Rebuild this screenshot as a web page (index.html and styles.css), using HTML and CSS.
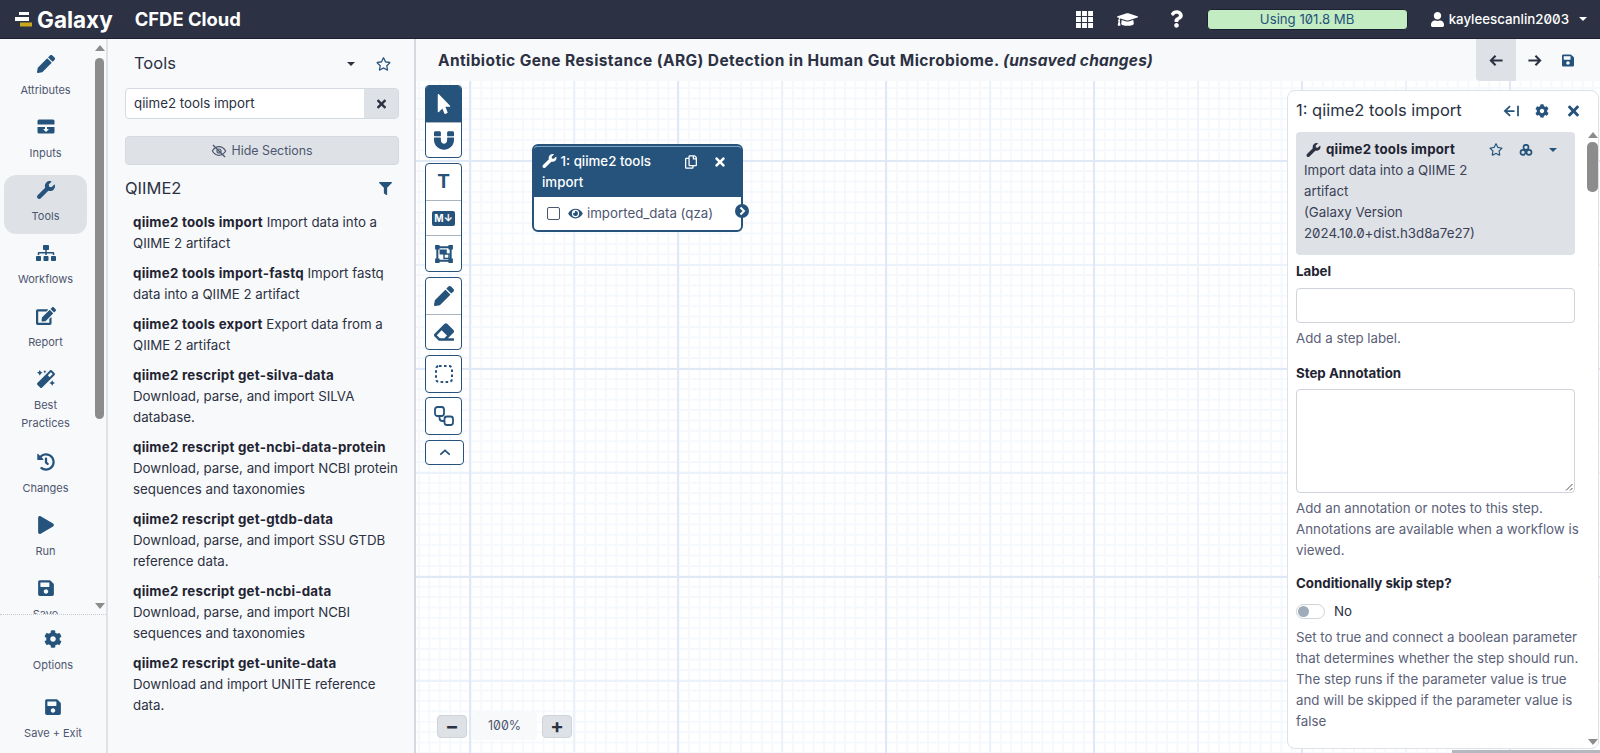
FILE: index.html
```html
<!DOCTYPE html>
<html lang="en">
<head>
  <meta charset="UTF-8" />
  <title>Galaxy Workflow Editor</title>
  <link rel="stylesheet" href="styles.css">
</head>
<body>

<svg class="defs" aria-hidden="true">
  <symbol id="i-pencil" viewBox="0 0 512 512"><path d="M497.9 142.1l-46.1 46.1c-4.7 4.7-12.3 4.7-17 0l-111-111c-4.7-4.7-4.7-12.3 0-17l46.1-46.1c18.7-18.7 49.1-18.7 67.9 0l60.1 60.1c18.8 18.7 18.8 49.1 0 67.9zM284.2 99.8L21.6 362.4.4 483.9c-2.9 16.4 11.4 30.6 27.8 27.8l121.5-21.3 262.6-262.6c4.7-4.7 4.7-12.3 0-17l-111-111c-4.8-4.7-12.4-4.7-17.1 0z"/></symbol>
  <symbol id="i-wrench" viewBox="0 0 512 512"><path d="M507.73 109.1c-2.24-9.03-13.54-12.09-20.12-5.51l-74.36 74.36-67.88-11.31-11.31-67.88 74.36-74.36c6.62-6.62 3.43-17.9-5.66-20.16-47.38-11.74-99.55.91-136.58 37.93-39.64 39.64-50.55 97.1-34.05 147.2L18.74 402.76c-24.99 24.99-24.99 65.51 0 90.5 24.99 24.99 65.51 24.99 90.5 0l213.21-213.21c50.12 16.71 107.47 5.68 147.37-34.22 37.07-37.07 49.7-89.32 37.91-136.73z"/></symbol>
  <symbol id="i-save" viewBox="0 0 448 512"><path d="M433.941 129.941l-83.882-83.882A48 48 0 0 0 316.118 32H48C21.49 32 0 53.49 0 80v352c0 26.51 21.49 48 48 48h352c26.51 0 48-21.49 48-48V163.882a48 48 0 0 0-14.059-33.941zM224 416c-35.346 0-64-28.654-64-64 0-35.346 28.654-64 64-64s64 28.654 64 64c0 35.346-28.654 64-64 64zm96-304.52V212c0 6.627-5.373 12-12 12H76c-6.627 0-12-5.373-12-12V108c0-6.627 5.373-12 12-12h228.52c3.183 0 6.235 1.264 8.485 3.515l3.48 3.48A11.996 11.996 0 0 1 320 111.48z"/></symbol>
  <symbol id="i-play" viewBox="0 0 448 512"><path d="M424.4 214.7L72.4 6.6C43.8-10.3 0 6.1 0 47.9V464c0 37.5 40.7 60.1 72.4 41.3l352-208c31.4-18.5 31.5-64.1 0-82.6z"/></symbol>
  <symbol id="i-cog" viewBox="0 0 512 512"><path d="M487.4 315.7l-42.6-24.6c4.3-23.2 4.3-47 0-70.2l42.6-24.6c4.9-2.8 7.1-8.6 5.5-14-11.1-35.6-30-67.8-54.7-94.6-3.8-4.1-10-5.1-14.8-2.3L380.8 110c-17.9-15.4-38.5-27.3-60.8-35.1V25.8c0-5.6-3.9-10.5-9.4-11.7-36.7-8.2-74.3-7.8-109.2 0-5.5 1.2-9.4 6.1-9.4 11.7V75c-22.2 7.9-42.8 19.8-60.8 35.1L88.7 85.5c-4.9-2.8-11-1.9-14.8 2.3-24.7 26.7-43.6 58.9-54.7 94.6-1.7 5.4.6 11.2 5.5 14L67.3 221c-4.3 23.2-4.3 47 0 70.2l-42.6 24.6c-4.9 2.8-7.1 8.6-5.5 14 11.1 35.6 30 67.8 54.7 94.6 3.8 4.1 10 5.1 14.8 2.3l42.6-24.6c17.9 15.4 38.5 27.3 60.8 35.1v49.2c0 5.6 3.9 10.5 9.4 11.7 36.7 8.2 74.3 7.8 109.2 0 5.5-1.2 9.4-6.1 9.4-11.7v-49.2c22.2-7.9 42.8-19.8 60.8-35.1l42.6 24.6c4.9 2.8 11 1.9 14.8-2.3 24.7-26.7 43.6-58.9 54.7-94.6 1.5-5.5-.7-11.3-5.6-14.1zM256 336c-44.1 0-80-35.9-80-80s35.9-80 80-80 80 35.9 80 80-35.9 80-80 80z"/></symbol>
  <symbol id="i-times" viewBox="0 0 352 512"><path d="M242.72 256l100.07-100.07c12.28-12.28 12.28-32.19 0-44.48l-22.24-22.24c-12.28-12.28-32.19-12.28-44.48 0L176 189.28 75.93 89.21c-12.28-12.28-32.19-12.28-44.48 0L9.21 111.45c-12.28 12.28-12.28 32.19 0 44.48L109.28 256 9.21 356.07c-12.28 12.28-12.28 32.19 0 44.48l22.24 22.24c12.28 12.28 32.2 12.28 44.48 0L176 322.72l100.07 100.07c12.28 12.28 32.2 12.28 44.48 0l22.24-22.24c12.28-12.28 12.28-32.19 0-44.48L242.72 256z"/></symbol>
  <symbol id="i-user" viewBox="0 0 448 512"><path d="M224 256c70.7 0 128-57.3 128-128S294.7 0 224 0 96 57.3 96 128s57.3 128 128 128zm89.6 32h-16.7c-22.2 10.2-46.9 16-72.9 16s-50.6-5.8-72.9-16h-16.7C60.2 288 0 348.2 0 422.4V464c0 26.5 21.5 48 48 48h352c26.5 0 48-21.5 48-48v-41.6c0-74.2-60.2-134.4-134.4-134.4z"/></symbol>
  <symbol id="i-star" viewBox="0 0 576 512"><path d="M528.1 171.5L382 150.2 316.7 17.8c-11.7-23.6-45.6-23.9-57.4 0L194 150.2 47.9 171.4c-26.2 3.8-36.7 36.1-17.7 54.6l105.7 103-25 145.5c-4.5 26.3 23.2 46 46.4 33.7L288 439.6l130.7 68.7c23.2 12.2 50.9-7.4 46.4-33.7l-25-145.5 105.7-103c19-18.5 8.5-50.8-17.7-54.6zM388.6 312.3l23.7 138.4L288 385.4l-124.3 65.3 23.7-138.4-100.6-98 139-20.2 62.2-126 62.2 126 139 20.2-100.6 98z"/></symbol>
  <symbol id="i-filter" viewBox="0 0 512 512"><path d="M487.976 0H24.028C2.71 0-8.047 25.866 7.058 40.971L192 225.941V432c0 7.831 3.821 15.17 10.237 19.662l80 55.98C298.02 518.69 320 507.493 320 487.98V225.941l184.947-184.97C520.021 25.896 509.338 0 487.976 0z"/></symbol>
  <symbol id="i-question" viewBox="0 0 384 512"><path d="M202.021 0C122.202 0 70.503 32.703 29.914 91.026c-7.363 10.58-5.093 25.086 5.178 32.874l43.138 32.709c10.373 7.865 25.132 6.026 33.253-4.148 25.049-31.381 43.63-49.449 82.757-49.449 30.764 0 68.816 19.799 68.816 49.631 0 22.552-18.617 34.134-48.993 51.164-35.423 19.86-82.299 44.576-82.299 106.405V320c0 13.255 10.745 24 24 24h72.471c13.255 0 24-10.745 24-24v-5.773c0-42.86 125.268-44.645 125.268-160.627C377.504 66.256 286.902 0 202.021 0zM192 373.459c-38.196 0-69.271 31.075-69.271 69.271 0 38.195 31.075 69.27 69.271 69.27s69.271-31.075 69.271-69.271-31.075-69.27-69.271-69.27z"/></symbol>
  <symbol id="i-cap" viewBox="0 0 640 512"><path d="M622.34 153.2L343.4 67.5c-15.2-4.67-31.6-4.67-46.79 0L17.66 153.2c-23.54 7.23-23.54 38.36 0 45.59l48.63 14.94c-10.67 13.19-17.23 29.28-17.88 46.9C38.78 266.15 32 276.11 32 288c0 10.78 5.68 19.85 13.86 25.65L20.33 428.53C18.11 438.52 25.71 448 35.94 448h56.11c10.24 0 17.84-9.48 15.62-19.47L82.14 313.65C90.32 307.85 96 298.78 96 288c0-11.57-6.47-21.25-15.66-26.87.76-15.02 8.44-28.3 20.69-36.72L296.6 284.5c9.06 2.78 26.44 6.25 46.79 0l278.95-85.7c23.55-7.24 23.55-38.36 0-45.6zM352.79 315.09c-28.53 8.76-52.84 3.92-65.59 0l-145.02-44.55L128 384c0 35.35 85.96 64 192 64s192-28.65 192-64l-14.18-113.47-145.03 44.56z"/></symbol>
  <symbol id="i-sitemap" viewBox="0 0 640 512"><path d="M128 352H32c-17.67 0-32 14.33-32 32v96c0 17.67 14.33 32 32 32h96c17.67 0 32-14.33 32-32v-96c0-17.67-14.33-32-32-32zm-24-80h192v48h48v-48h192v48h48v-57.59c0-21.17-17.23-38.41-38.41-38.41H344v-64h40c17.67 0 32-14.33 32-32V32c0-17.67-14.33-32-32-32H256c-17.67 0-32 14.33-32 32v96c0 17.67 14.33 32 32 32h40v64H94.41C73.23 224 56 241.23 56 262.41V320h48v-48zm264 80h-96c-17.67 0-32 14.33-32 32v96c0 17.67 14.33 32 32 32h96c17.67 0 32-14.33 32-32v-96c0-17.67-14.33-32-32-32zm240 0h-96c-17.67 0-32 14.33-32 32v96c0 17.67 14.33 32 32 32h96c17.67 0 32-14.33 32-32v-96c0-17.67-14.33-32-32-32z"/></symbol>
  <symbol id="i-edit" viewBox="0 0 576 512"><path d="M402.6 83.2l90.2 90.2c3.8 3.8 3.8 10 0 13.8L274.4 405.6l-92.8 10.3c-12.4 1.4-22.9-9.1-21.5-21.5l10.3-92.8L388.8 83.2c3.8-3.8 10-3.8 13.8 0zm162-22.9l-48.8-48.8c-15.2-15.2-39.9-15.2-55.2 0l-35.4 35.4c-3.8 3.8-3.8 10 0 13.8l90.2 90.2c3.8 3.8 10 3.8 13.8 0l35.4-35.4c15.2-15.3 15.2-40 0-55.2zM384 346.2V448H64V128h229.8c3.2 0 6.2-1.3 8.5-3.5l40-40c7.6-7.6 2.2-20.5-8.5-20.5H48C21.5 64 0 85.5 0 112v352c0 26.5 21.5 48 48 48h352c26.5 0 48-21.5 48-48V306.2c0-10.7-12.9-16-20.5-8.5l-40 40c-2.2 2.3-3.5 5.3-3.5 8.5z"/></symbol>
  <symbol id="i-magic" viewBox="0 0 512 512"><path d="M224 96l16-32 32-16-32-16-16-32-16 32-32 16 32 16 16 32zM80 160l26.66-53.33L160 80l-53.34-26.67L80 0 53.34 53.33 0 80l53.34 26.67L80 160zm352 128l-26.66 53.33L352 368l53.34 26.67L432 448l26.66-53.33L512 368l-53.34-26.67L432 288zm70.62-193.77L417.77 9.38C411.53 3.12 403.34 0 395.15 0c-8.19 0-16.38 3.12-22.63 9.38L9.38 372.52c-12.5 12.5-12.5 32.76 0 45.25l84.85 84.85c6.25 6.25 14.44 9.37 22.62 9.37 8.19 0 16.38-3.12 22.63-9.37l363.14-363.15c12.5-12.48 12.5-32.75 0-45.24zM359.45 203.46l-50.91-50.91 86.6-86.6 50.91 50.91-86.6 86.6z"/></symbol>
  <symbol id="i-history" viewBox="0 0 512 512"><path d="M504 255.531c.253 136.64-111.18 248.372-247.82 248.468-59.015.042-113.223-20.53-155.822-54.911-11.077-8.94-11.905-25.541-1.839-35.607l11.267-11.267c8.609-8.609 22.353-9.551 31.891-1.984C173.062 425.135 212.781 440 256 440c101.705 0 184-82.311 184-184 0-101.705-82.311-184-184-184-48.814 0-93.149 18.969-126.068 49.932l50.754 50.754c10.08 10.08 2.941 27.314-11.313 27.314H24c-8.837 0-16-7.163-16-16V38.627c0-14.254 17.234-21.393 27.314-11.314l49.372 49.372C129.209 34.136 189.552 8 256 8c136.81 0 247.747 110.78 248 247.531zm-180.912 78.784l9.823-12.63c8.138-10.463 6.253-25.542-4.21-33.679L288 256.349V152c0-13.255-10.745-24-24-24h-16c-13.255 0-24 10.745-24 24v135.651l65.409 50.874c10.463 8.137 25.541 6.253 33.679-4.21z"/></symbol>
  <symbol id="i-eye" viewBox="0 0 576 512"><path d="M572.52 241.4C518.29 135.59 410.93 64 288 64S57.68 135.64 3.48 241.41a32.35 32.35 0 0 0 0 29.19C57.71 376.41 165.07 448 288 448s230.32-71.64 284.52-177.41a32.35 32.35 0 0 0 0-29.19zM288 400a144 144 0 1 1 144-144 143.93 143.93 0 0 1-144 144zm0-240a95.31 95.31 0 0 0-25.31 3.79 47.85 47.85 0 0 1-66.9 66.9A95.78 95.78 0 1 0 288 160z"/></symbol>
  <symbol id="i-eraser" viewBox="0 0 512 512"><path d="M497.941 273.941c18.745-18.745 18.745-49.137 0-67.882l-160-160c-18.745-18.745-49.137-18.745-67.882 0l-256 256c-18.745 18.745-18.745 49.137 0 67.882l96 96A48.004 48.004 0 0 0 144 480h356c6.627 0 12-5.373 12-12v-40c0-6.627-5.373-12-12-12H355.883l142.058-142.059zm-302.627-62.627l137.373 137.373L265.373 416H150.628l-80-80 124.686-124.686z"/></symbol>
  <symbol id="i-pointer" viewBox="0 0 320 512"><path d="M302.189 329.126H196.105l55.831 135.993c3.889 9.428-.555 19.999-9.444 23.999l-49.165 21.427c-9.165 4-19.443-.571-23.332-9.714l-53.053-129.136-86.664 89.138C18.729 472.71 0 463.554 0 447.977V18.299C0 1.899 19.921-6.096 30.277 5.443l284.412 292.542c11.472 11.179 3.007 31.141-12.5 31.141z"/></symbol>
  <symbol id="i-magnet" viewBox="0 0 512 512"><path d="M164 160H12c-6.6 0-12-5.4-12-12V68c0-19.900 16.100-36 36-36h104c19.900 0 36 16.100 36 36v80c0 6.600-5.400 12-12 12zm348-12V68c0-19.900-16.100-36-36-36H372c-19.900 0-36 16.100-36 36v80c0 6.600 5.400 12 12 12h152c6.600 0 12-5.400 12-12zm-164 44c-6.600 0-12 5.400-12 12v52c0 128-160 128-160 0v-52c0-6.600-5.400-12-12-12H12c-6.700 0-12 5.400-12 12v53c0 151 136 247 257 247s255-96 255-247v-53c0-6.700-5.300-12-12-12H348z"/></symbol>
  <symbol id="i-copy" viewBox="0 0 448 512"><path d="M433.941 65.941l-51.882-51.882A48 48 0 0 0 348.118 0H176c-26.51 0-48 21.49-48 48v48H48c-26.51 0-48 21.49-48 48v320c0 26.51 21.49 48 48 48h224c26.51 0 48-21.49 48-48v-48h80c26.51 0 48-21.49 48-48V99.882a48 48 0 0 0-14.059-33.941zM266 464H54a6 6 0 0 1-6-6V150a6 6 0 0 1 6-6h74v224c0 26.51 21.49 48 48 48h96v42a6 6 0 0 1-6 6zm128-96H182a6 6 0 0 1-6-6V54a6 6 0 0 1 6-6h106v88c0 13.255 10.745 24 24 24h88v202a6 6 0 0 1-6 6zm6-256h-64V48h9.632c1.591 0 3.117.632 4.243 1.757l48.368 48.368a6 6 0 0 1 1.757 4.243V112z"/></symbol>
</svg>

<!-- Top bar -->
<header class="topbar">
  <div class="brand">
    <svg class="brand-logo" viewBox="0 0 18 15"><rect x="4" y="0" width="10" height="3" fill="#fff"/><rect x="0" y="5" width="14" height="4" fill="#fff"/><rect x="5" y="10.500" width="12" height="4" fill="#c9a81f"/></svg>
    <span class="brand-name">Galaxy</span>
    <span class="brand-sub">CFDE Cloud</span>
  </div>
  <div class="topbar-right">
    <svg class="top-grid" viewBox="0 0 16 16"><path d="M0 0h4.600v4.600H0zM5.700 0h4.600v4.600H5.700zM11.400 0H16v4.600h-4.600zM0 5.700h4.600v4.600H0zM5.700 5.700h4.600v4.600H5.700zM11.400 5.700H16v4.600h-4.600zM0 11.400h4.600V16H0zM5.700 11.400h4.600V16H5.700zM11.400 11.400H16V16h-4.600z"/></svg>
    <svg class="top-cap"><use href="#i-cap"/></svg>
    <svg class="top-help"><use href="#i-question"/></svg>
    <div class="quota">Using 101.8 MB</div>
    <div class="user">
      <svg class="top-user"><use href="#i-user"/></svg>
      <span>kayleescanlin2003</span>
      <span class="caret caret-white"></span>
    </div>
  </div>
</header>

<div class="main">
  <!-- Activity bar -->
  <nav class="activity">
    <div class="activity-scroll">
      <div class="activity-list">
        <a class="act"><svg><use href="#i-pencil"/></svg><span>Attributes</span></a>
        <a class="act">
          <svg viewBox="0 0 18 18"><path d="M2 1.500h14a1.500 1.500 0 0 1 1.500 1.500v3.500H.5V3A1.500 1.500 0 0 1 2 1.500zM.5 9H8v2H6l3 3 3-3h-2V9h7.500v5a1.500 1.500 0 0 1-1.500 1.500H2A1.500 1.500 0 0 1 .5 14z"/></svg>
          <span>Inputs</span>
        </a>
        <a class="act act-on"><svg><use href="#i-wrench"/></svg><span>Tools</span></a>
        <a class="act"><svg><use href="#i-sitemap"/></svg><span>Workflows</span></a>
        <a class="act"><svg><use href="#i-edit"/></svg><span>Report</span></a>
        <a class="act act-tall"><svg><use href="#i-magic"/></svg><span>Best Practices</span></a>
        <a class="act"><svg><use href="#i-history"/></svg><span>Changes</span></a>
        <a class="act"><svg><use href="#i-play"/></svg><span>Run</span></a>
        <a class="act"><svg><use href="#i-save"/></svg><span>Save</span></a>
      </div>
      <div class="scrollbar">
        <span class="sb-up"></span>
        <div class="sb-track"><div class="sb-thumb"></div></div>
        <span class="sb-down"></span>
      </div>
    </div>
    <div class="activity-bottom">
      <a class="act"><svg><use href="#i-cog"/></svg><span>Options</span></a>
      <a class="act"><svg><use href="#i-save"/></svg><span>Save + Exit</span></a>
    </div>
  </nav>

  <!-- Tool panel -->
  <aside class="tools">
    <div class="tools-head">
      <h3>Tools</h3>
      <span class="caret"></span>
      <svg class="tools-star"><use href="#i-star"/></svg>
    </div>
    <div class="search">
      <div class="search-input">qiime2 tools import</div>
      <div class="search-clear"><svg><use href="#i-times"/></svg></div>
    </div>
    <div class="hide-btn">
      <svg viewBox="0 0 24 20"><path d="M2 10s4-6.500 10-6.500S22 10 22 10s-4 6.500-10 6.500S2 10 2 10z" fill="none" stroke="currentColor" stroke-width="1.800"/><circle cx="12" cy="10" r="3" fill="none" stroke="currentColor" stroke-width="1.800"/><path d="M3 1l18 18" stroke="currentColor" stroke-width="2"/></svg>
      Hide Sections
    </div>
    <div class="section-head">
      <span>QIIME2</span>
      <svg><use href="#i-filter"/></svg>
    </div>
    <ul class="tool-list">
      <li><b>qiime2 tools import</b> Import data into a QIIME 2 artifact</li>
      <li><b>qiime2 tools import-fastq</b> Import fastq data into a QIIME 2 artifact</li>
      <li><b>qiime2 tools export</b> Export data from a QIIME 2 artifact</li>
      <li><b>qiime2 rescript get-silva-data</b> Download, parse, and import SILVA database.</li>
      <li><b>qiime2 rescript get-ncbi-data-protein</b> Download, parse, and import NCBI protein sequences and taxonomies</li>
      <li><b>qiime2 rescript get-gtdb-data</b> Download, parse, and import SSU GTDB reference data.</li>
      <li><b>qiime2 rescript get-ncbi-data</b> Download, parse, and import NCBI sequences and taxonomies</li>
      <li><b>qiime2 rescript get-unite-data</b> Download and import UNITE reference data.</li>
    </ul>
  </aside>

  <!-- Workflow editor -->
  <section class="editor">
    <div class="editor-head">
      <div class="wf-title">Antibiotic Gene Resistance (ARG) Detection in Human Gut Microbiome. <i>(unsaved changes)</i></div>
      <div class="head-btns">
        <a class="head-btn head-btn-on"><svg viewBox="0 0 16 16"><path d="M14.500 8H2M7 3L2 8l5 5"/></svg></a>
        <a class="head-btn"><svg viewBox="0 0 16 16"><path d="M1.500 8H14M9 3l5 5-5 5"/></svg></a>
        <a class="head-btn head-save"><svg><use href="#i-save"/></svg></a>
      </div>
    </div>
    <div class="canvas">
      <div class="toolbar">
        <div class="tb-group">
          <a class="tb tb-on"><svg class="ic-pointer"><use href="#i-pointer"/></svg></a>
          <a class="tb"><svg><use href="#i-magnet"/></svg></a>
        </div>
        <div class="tb-group">
          <a class="tb"><span class="tb-t">T</span></a>
          <a class="tb"><span class="tb-md">M↓</span></a>
          <a class="tb"><svg viewBox="0 0 18 18"><path d="M3 3h12v12H3z" fill="none" stroke="currentColor" stroke-width="1.800"/><path d="M1 1h4v4H1zM13 1h4v4h-4zM1 13h4v4H1zM13 13h4v4h-4zM5 5h6.500v4.500H5z"/><rect x="9" y="9" width="4.500" height="4" fill="#fff" stroke="currentColor" stroke-width="1.300"/></svg></a>
        </div>
        <div class="tb-group">
          <a class="tb"><svg><use href="#i-pencil"/></svg></a>
          <a class="tb"><svg><use href="#i-eraser"/></svg></a>
        </div>
        <div class="tb-group">
          <a class="tb"><svg viewBox="0 0 20 20"><rect x="2" y="2" width="16" height="16" rx="3" fill="none" stroke="currentColor" stroke-width="2" stroke-dasharray="2.600 2.400"/></svg></a>
        </div>
        <div class="tb-group">
          <a class="tb"><svg viewBox="0 0 20 20"><rect x="1" y="1" width="9" height="9" rx="2.500" fill="none" stroke="currentColor" stroke-width="1.800"/><rect x="10.500" y="10.500" width="8.500" height="8.500" rx="2.500" fill="none" stroke="currentColor" stroke-width="1.800"/><path d="M5.500 10v2a3 3 0 0 0 3 3h2" fill="none" stroke="currentColor" stroke-width="1.800"/></svg></a>
        </div>
        <a class="tb-collapse"><svg viewBox="0 0 14 8"><path d="M1.500 6.500L7 1.500l5.500 5"/></svg></a>
      </div>

      <div class="node">
        <div class="node-head">
          <div class="node-icons">
            <svg class="node-copy"><use href="#i-copy"/></svg>
            <svg class="node-close"><use href="#i-times"/></svg>
          </div>
          <svg class="node-wrench"><use href="#i-wrench"/></svg> 1: qiime2 tools import
        </div>
        <div class="node-row">
          <span class="node-check"></span>
          <svg class="node-eye"><use href="#i-eye"/></svg>
          <span>imported_data (qza)</span>
        </div>
        <span class="node-port"><svg viewBox="0 0 14 14"><path d="M5.500 3.500L9 7l-3.500 3.500"/></svg></span>
      </div>

      <div class="zoom">
        <a class="zoom-btn">−</a>
        <span class="zoom-val">100%</span>
        <a class="zoom-btn">+</a>
      </div>

      <div class="minimap-peek"></div>

      <aside class="props">
        <div class="props-head">
          <span>1: qiime2 tools import</span>
          <div class="props-icons">
            <svg class="ic-back" viewBox="0 0 20 16"><path d="M9 2.500L3 8l6 5.500M3 8h11M18 2v12"/></svg>
            <svg class="ic-cog"><use href="#i-cog"/></svg>
            <svg class="ic-x"><use href="#i-times"/></svg>
          </div>
        </div>
        <div class="props-body">
          <div class="props-scroll">
            <div class="card">
              <div class="card-icons">
                <svg class="card-star"><use href="#i-star"/></svg>
                <svg class="card-share" viewBox="0 0 20 18"><circle cx="10" cy="5" r="3.800"/><circle cx="5.500" cy="12.500" r="3.800"/><circle cx="14.500" cy="12.500" r="3.800"/></svg>
                <span class="caret caret-blue"></span>
              </div>
              <div class="card-title"><svg><use href="#i-wrench"/></svg><b>qiime2 tools import</b></div>
              <div class="card-text">Import data into a QIIME 2<br>artifact<br>(Galaxy Version<br>2024.10.0+dist.h3d8a7e27)</div>
            </div>
            <div class="field-label">Label</div>
            <div class="text-input"></div>
            <div class="help">Add a step label.</div>
            <div class="field-label field-gap">Step Annotation</div>
            <div class="text-area">
              <svg viewBox="0 0 8 8"><path d="M7.500 1L1 7.500M7.500 5L5 7.500"/></svg>
            </div>
            <div class="help">Add an annotation or notes to this step. Annotations are available when a workflow is viewed.</div>
            <div class="field-label field-skip">Conditionally skip step?</div>
            <div class="toggle-row"><span class="switch"></span><span>No</span></div>
            <div class="help help-last">Set to true and connect a boolean parameter that determines whether the step should run. The step runs if the parameter value is true and will be skipped if the parameter value is false</div>
          </div>
          <div class="scrollbar props-bar">
            <span class="sb-up"></span>
            <div class="sb-track"><div class="sb-thumb"></div></div>
            <span class="sb-down"></span>
          </div>
        </div>
      </aside>
    </div>
  </section>
</div>

</body>
</html>
```

FILE: styles.css
```css
* {
  box-sizing: border-box;
}

html, body {
  margin: 0;
  height: 753px;
  overflow: hidden;
}

body {
  display: flex;
  flex-direction: column;
  font-family: "Inter", "Noto Sans", sans-serif;
  font-size: 13.3px;
  font-feature-settings: "zero";
  line-height: 21px;
  color: #2c3143;
  background: #f8f9fa;
}

svg {
  fill: currentColor;
}

.defs {
  display: none;
}

.caret {
  display: inline-block;
  width: 0;
  height: 0;
  border-left: 4px solid transparent;
  border-right: 4px solid transparent;
  border-top: 4.5px solid #2c3143;
}

.caret-white {
  border-top-color: #fff;
}

.caret-blue {
  border-top-color: #25537b;
}

/* Top bar */
.topbar {
  flex: 0 0 39px;
  display: flex;
  justify-content: space-between;
  align-items: center;
  background: #2c3143;
  border-bottom: 1px solid #1c2030;
  color: #fff;
}

.brand {
  display: flex;
  align-items: center;
  padding-left: 15px;
}

.brand-logo {
  width: 18px;
  height: 15px;
  margin-right: 4px;
}

.brand-name {
  font-size: 22.5px;
  font-weight: 700;
}

.brand-sub {
  font-size: 18.4px;
  font-weight: 700;
  margin-left: 22px;
}

.topbar-right {
  display: flex;
  align-items: center;
  padding-right: 13px;
}

.top-grid {
  width: 17px;
  height: 17px;
  margin-right: 24px;
}

.top-cap {
  width: 21px;
  height: 17px;
  margin-right: 32px;
}

.top-help {
  width: 13px;
  height: 18px;
  margin-right: 24px;
}

.quota {
  width: 201px;
  height: 21px;
  border-radius: 4px;
  border: 1px solid #1c2030;
  background: #c3ecc2;
  color: #25537b;
  text-align: center;
  line-height: 19px;
  font-size: 13.2px;
  margin-right: 23px;
}

.user {
  display: flex;
  align-items: center;
  font-size: 13.3px;
  font-weight: 500;
}

.top-user {
  width: 13px;
  height: 15px;
  margin-right: 5px;
}

.user .caret {
  margin-left: 10px;
}

.main {
  flex: 1;
  display: flex;
  min-height: 0;
}

/* Activity bar */
.activity {
  flex: 0 0 108px;
  display: flex;
  flex-direction: column;
  background: #f8f9fa;
  border-right: 2px solid #dfe3e8;
}

.activity-scroll {
  flex: 0 0 575px;
  display: flex;
  overflow: hidden;
}

.activity-list {
  width: 95px;
  padding: 10px 8px 0 4px;
  display: flex;
  flex-direction: column;
  gap: 4px;
}

.act {
  display: flex;
  flex-direction: column;
  align-items: center;
  flex-shrink: 0;
  padding: 6px 12px 9px;
  border-radius: 12px;
  color: #25537b;
  text-align: center;
}

.act svg {
  width: 20px;
  height: 18px;
  margin-bottom: 8px;
}

.act span {
  font-size: 11px;
  line-height: 18px;
  color: #4d5670;
}

.act-on {
  background: #dee2e6;
}

.act-tall {
  padding-bottom: 11px;
}

.activity-bottom {
  flex: 1;
  border-top: 1px dotted #c5cad1;
  padding-top: 15px;
}

.activity-bottom .act {
  height: 68px;
  padding: 0 2px;
}

.scrollbar {
  width: 9px;
  display: flex;
  flex-direction: column;
  align-items: center;
}

.activity-scroll .scrollbar {
  padding-top: 6px;
}

.sb-up, .sb-down {
  width: 0;
  height: 0;
  border-left: 5px solid transparent;
  border-right: 5px solid transparent;
  flex-shrink: 0;
}

.sb-up {
  border-bottom: 6px solid #8c8c8c;
}

.sb-down {
  border-top: 6px solid #8c8c8c;
  margin-bottom: 5px;
}

.sb-track {
  flex: 1;
  width: 100%;
  padding-top: 7px;
}

.sb-thumb {
  width: 100%;
  height: 361px;
  background: #8c8c8c;
  border-radius: 5px;
}

/* Tool panel */
.tools {
  flex: 0 0 308px;
  padding: 0 15px 0 17px;
  background: #f8f9fa;
  border-right: 2px solid #d5dae0;
}

.tools-head {
  display: flex;
  align-items: center;
  height: 49px;
  padding-left: 9px;
}

.tools-head h3 {
  flex: 1;
  margin: 0;
  font-size: 16.5px;
  font-weight: 400;
}

.tools-star {
  width: 15px;
  height: 14px;
  color: #25537b;
  margin: 0 8px 0 21px;
}

.search {
  display: flex;
  height: 31px;
  border: 1px solid #d5dae0;
  border-radius: 4px;
  background: #fff;
}

.search-input {
  flex: 1;
  padding-left: 8px;
  line-height: 29px;
}

.search-clear {
  width: 34px;
  background: #dee2e6;
  display: flex;
  align-items: center;
  justify-content: center;
}

.search-clear svg {
  width: 9px;
  height: 14px;
}

.hide-btn {
  margin-top: 17px;
  height: 29px;
  border: 1px solid #d5dae0;
  border-radius: 4px;
  background: #dee2e6;
  color: #4d5670;
  font-size: 12.4px;
  display: flex;
  align-items: center;
  justify-content: center;
  gap: 4px;
}

.hide-btn svg {
  width: 16px;
  height: 14px;
}

.section-head {
  display: flex;
  justify-content: space-between;
  align-items: center;
  margin-top: 11px;
  height: 24px;
  font-size: 16.5px;
  padding-right: 7px;
}

.section-head svg {
  width: 13px;
  height: 13px;
  color: #25537b;
}

.tool-list {
  list-style: none;
  margin: 12px 0 0;
  padding: 0 0 0 8px;
}

.tool-list li {
  margin-bottom: 9px;
}

.tool-list b {
  font-weight: 700;
  letter-spacing: 0.25px;
  color: #1f2433;
}

/* Editor */
.editor {
  flex: 1;
  display: flex;
  flex-direction: column;
  min-width: 0;
}

.editor-head {
  flex: 0 0 42px;
  display: flex;
  align-items: center;
  justify-content: space-between;
  padding: 0 10px 0 22px;
  background: #f8f9fa;
}

.wf-title {
  font-size: 15.5px;
  font-weight: 700;
  letter-spacing: 0.4px;
  white-space: nowrap;
}

.wf-title i {
  letter-spacing: 0.2px;
}

.head-btns {
  display: flex;
  height: 100%;
}

.head-btn {
  width: 37px;
  display: flex;
  align-items: center;
  justify-content: center;
}

.head-btn svg {
  width: 15px;
  height: 15px;
  fill: none;
  stroke: #2c3143;
  stroke-width: 2.2;
}

.head-btn-on {
  width: 40px;
  background: #dee2e6;
  border-radius: 0 0 0 4px;
}

.head-btn.head-save {
  width: 29px;
  margin-right: 8px;
}

.head-save svg {
  width: 12px;
  fill: #25537b;
  stroke: none;
}

/* Canvas */
.canvas {
  flex: 1;
  position: relative;
  overflow: hidden;
  background-color: #fff;
  background-image:
    linear-gradient(to right, #dfe9f5 2px, transparent 2px),
    linear-gradient(to bottom, #dfe9f5 2px, transparent 2px),
    linear-gradient(to right, #ecf2f9 2px, transparent 2px),
    linear-gradient(to bottom, #ecf2f9 2px, transparent 2px),
    linear-gradient(to right, #f5f8fc 2px, transparent 2px),
    linear-gradient(to bottom, #f5f8fc 2px, transparent 2px);
  background-size:
    208px 100%, 100% 208px,
    104px 100%, 100% 104px,
    10.4px 100%, 100% 10.4px;
  background-position:
    53px 0, 0 79px,
    53px 0, 0 79px,
    2px 0, 0 6px;
}

.toolbar {
  position: absolute;
  left: 9px;
  top: 4px;
  width: 39px;
}

.tb-group {
  width: 37px;
  margin-bottom: 4.7px;
  background: #fff;
  border: 1px solid #25537b;
  border-radius: 4px;
  overflow: hidden;
}

.tb {
  display: flex;
  align-items: center;
  justify-content: center;
  height: 35.7px;
  color: #25537b;
  border-top: 1px solid #aab4c0;
}

.tb:first-child {
  border-top: 0;
}

.tb svg {
  width: 20px;
  height: 20px;
}

.tb .ic-pointer {
  width: 14px;
  height: 20px;
}

.tb-on {
  background: #25537b;
  color: #fff;
}

.tb-t {
  font-size: 19px;
  font-weight: 700;
}

.tb-md {
  width: 23px;
  height: 15px;
  border-radius: 2px;
  background: #25537b;
  color: #fff;
  font-size: 10px;
  font-weight: 700;
  line-height: 15px;
  text-align: center;
  white-space: nowrap;
}

.tb-collapse {
  display: flex;
  align-items: center;
  justify-content: center;
  width: 39px;
  height: 25px;
  background: #fff;
  border: 1px solid #25537b;
  border-radius: 4px;
}

.tb-collapse svg {
  width: 12px;
  height: 7px;
  fill: none;
  stroke: #25537b;
  stroke-width: 2;
}

/* Node */
.node {
  position: absolute;
  left: 116px;
  top: 63px;
  width: 211px;
  height: 88px;
  background: #fff;
  border: 2px solid #25537b;
  border-radius: 6px;
}

.node-head {
  background: #25537b;
  color: #fff;
  padding: 4px 8px;
  height: 51px;
  font-weight: 500;
  border-top: 1px solid #7ea3c2;
  border-radius: 3px 3px 0 0;
}

.node-wrench {
  width: 15px;
  height: 14px;
  vertical-align: -2px;
}

.node-icons {
  float: right;
  display: flex;
  align-items: center;
  height: 21px;
  gap: 18px;
  padding-right: 8px;
}

.node-copy {
  width: 12px;
  height: 14px;
}

.node-close {
  width: 10px;
  height: 14px;
}

.node-row {
  display: flex;
  align-items: center;
  height: 32px;
  padding-left: 13px;
  color: #4d5670;
}

.node-check {
  width: 13px;
  height: 13px;
  border: 1.5px solid #4d5670;
  border-radius: 2px;
  margin-right: 8px;
}

.node-eye {
  width: 15px;
  height: 13px;
  color: #25537b;
  margin-right: 4px;
}

.node-port {
  position: absolute;
  right: -8px;
  bottom: 12px;
  width: 14px;
  height: 14px;
  border-radius: 50%;
  background: #25537b;
}

.node-port svg {
  display: block;
  fill: none;
  stroke: #fff;
  stroke-width: 2;
}

/* Zoom */
.zoom {
  position: absolute;
  left: 21px;
  bottom: 13px;
  display: flex;
  align-items: center;
  gap: 5px;
}

.zoom-btn {
  width: 30px;
  height: 23px;
  background: #dee2e6;
  border: 1px solid #ced3d9;
  border-radius: 4px;
  text-align: center;
  font-size: 20px;
  font-weight: 700;
  line-height: 20px;
}

.zoom-val {
  width: 65px;
  height: 28px;
  background: #f8f9fa;
  border-radius: 4px;
  text-align: center;
  font-size: 12.5px;
  line-height: 28px;
  color: #4d5670;
}

.minimap-peek {
  position: absolute;
  right: 0;
  bottom: 0;
  width: 148px;
  height: 3px;
  background: #b4b9c0;
}

/* Properties panel */
.props {
  position: absolute;
  left: 871px;
  top: 9px;
  width: 312px;
  height: 659px;
  background: #fff;
  border: 1px solid #dee2e6;
  border-radius: 8px;
  display: flex;
  flex-direction: column;
}

.props-head {
  flex: 0 0 37px;
  display: flex;
  align-items: center;
  justify-content: space-between;
  padding: 2px 0 0 8px;
  font-size: 16.5px;
}

.props-icons {
  display: flex;
  align-items: center;
  padding-right: 19px;
}

.props-icons svg {
  color: #25537b;
}

.ic-back {
  width: 18px;
  height: 14px;
  fill: none;
  stroke: #25537b;
  stroke-width: 2;
}

.ic-cog {
  width: 14px;
  height: 14px;
  margin-left: 15px;
}

.ic-x {
  width: 11px;
  height: 16px;
  margin-left: 19px;
}

.props-body {
  flex: 1;
  display: flex;
  min-height: 0;
}

.props-scroll {
  width: 297px;
  padding: 4px 0 0 8px;
  flex-shrink: 0;
}

.props-bar {
  width: 11px;
  padding-top: 4px;
  padding-bottom: 3px;
  margin-left: 2px;
}

.props-bar .sb-track {
  padding-top: 4px;
}

.props-bar .sb-down {
  margin-bottom: 0;
}

.props-bar .sb-thumb {
  height: 50px;
}

.card {
  height: 123px;
  width: 279px;
  padding: 7px 8px 0;
  background: #dee2e6;
  border-radius: 4px;
  color: #3a4056;
}

.card-title {
  display: flex;
  align-items: center;
  padding-left: 2px;
}

.card-title svg {
  width: 15px;
  height: 14px;
  margin-right: 5px;
  color: #2c3143;
}

.card-title b {
  color: #1f2433;
  letter-spacing: 0.2px;
}

.card-icons {
  float: right;
  display: flex;
  align-items: center;
  height: 21px;
  padding-right: 10px;
}

.card-star {
  width: 14px;
  height: 13px;
  color: #25537b;
}

.card-share {
  width: 14px;
  height: 12px;
  margin: 0 16px;
  fill: none;
  stroke: #25537b;
  stroke-width: 2.5;
}

.field-label {
  margin-top: 6px;
  font-weight: 700;
  line-height: 21px;
  color: #1f2433;
}

.field-gap {
  margin-top: 14px;
}

.field-skip {
  margin-top: 12px;
}

.text-input {
  margin-top: 6px;
  height: 35px;
  width: 279px;
  background: #fff;
  border: 1px solid #ced4da;
  border-radius: 4px;
}

.text-area {
  margin-top: 5px;
  height: 104px;
  width: 279px;
  background: #fff;
  border: 1px solid #ced4da;
  border-radius: 4px;
  display: flex;
  align-items: flex-end;
  justify-content: flex-end;
}

.text-area svg {
  width: 8px;
  height: 8px;
  margin: 0 1px 1px 0;
  fill: none;
  stroke: #555;
  stroke-width: 1;
}

.help {
  margin-top: 5px;
  width: 285px;
  color: #5b6178;
}

.toggle-row {
  display: flex;
  align-items: center;
  gap: 9px;
  height: 21px;
  margin-top: 7px;
}

.switch {
  position: relative;
  width: 29px;
  height: 15px;
  border: 1px solid #ced4da;
  border-radius: 8px;
  background: #fff;
}

.switch::after {
  content: "";
  position: absolute;
  left: 1px;
  top: 1px;
  width: 11px;
  height: 11px;
  border-radius: 50%;
  background: #9eabb8;
}
```
